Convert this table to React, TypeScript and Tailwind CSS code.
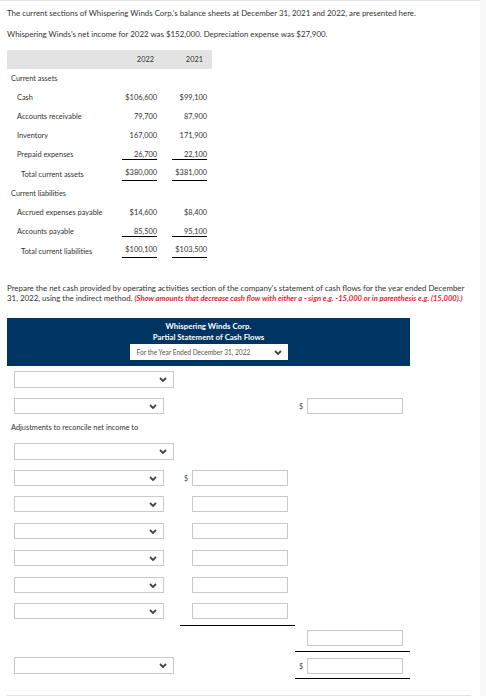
import React from 'react';

interface Row {
  label: string;
  a: string;
  b: string;
  indent: number;
  line?: 'under' | 'total';
}

const assets: Row[] = [
  { label: 'Cash', a: '$106,600', b: '$99,100', indent: 10 },
  { label: 'Accounts receivable', a: '79,700', b: '87,900', indent: 10 },
  { label: 'Inventory', a: '167,000', b: '171,900', indent: 10 },
  { label: 'Prepaid expenses', a: '26,700', b: '22,100', indent: 10, line: 'under' },
  { label: 'Total current assets', a: '$380,000', b: '$381,000', indent: 14, line: 'total' },
];

const liabilities: Row[] = [
  { label: 'Accrued expenses payable', a: '$14,600', b: '$8,400', indent: 10 },
  { label: 'Accounts payable', a: '85,500', b: '95,100', indent: 10, line: 'under' },
  { label: 'Total current liabilities', a: '$100,100', b: '$103,500', indent: 14, line: 'total' },
];

const Chevron = () => (
  <svg width="8" height="5" viewBox="0 0 8 5" className="shrink-0">
    <polyline points="1,1 4,4 7,1" fill="none" stroke="#444" strokeWidth="1.8" />
  </svg>
);

const Select = ({ wide }: { wide?: boolean }) => (
  <div
    className={`${wide ? 'w-[160px] h-[17px]' : 'w-[150px] h-[16px]'} ml-[7px] flex items-center justify-end pr-[6px] border border-[#c9c9c9] bg-white`}
  >
    <Chevron />
  </div>
);

const Amount = ({ dollar }: { dollar?: boolean }) => (
  <div className="w-[115px] flex items-center">
    <span className="w-[12px] pl-[4px] text-[7px] text-[#3c4a5c]">{dollar ? '$' : ''}</span>
    <div className="w-[96px] h-[16px] border border-[#c9c9c9] bg-white" />
  </div>
);

const Num = ({ value, line, w }: { value: string; line?: Row['line']; w: string }) => (
  <div className={`${w} flex justify-end`}>
    <span
      className={`w-[35px] text-right leading-[9px] ${
        line === 'under' ? 'border-b border-black' : line === 'total' ? 'pb-[3px] border-b border-black' : ''
      }`}
    >
      {value}
    </span>
  </div>
);

const TableRow = ({ row }: { row: Row }) => (
  <div className={`flex items-center ${row.line === 'total' ? 'h-[20px] pt-[1px]' : 'h-[19px]'}`}>
    <div className="w-[109px] whitespace-nowrap" style={{ paddingLeft: row.indent }}>
      {row.label}
    </div>
    <Num value={row.a} line={row.line} w="w-[41px]" />
    <Num value={row.b} line={row.line} w="w-[50px]" />
  </div>
);

export default function App() {
  return (
    <div className="flex w-[486px] h-[696px] overflow-hidden bg-white font-['Lato','Noto_Sans',sans-serif] text-[7.9px] leading-[10px] text-[#333]">
      <div className="w-[480px] border-t border-[#e2e2e2] pl-[7px] pt-[7px] flex flex-col">
        <p className="whitespace-nowrap">The current sections of Whispering Winds Corp.'s balance sheets at December 31, 2021 and 2022, are presented here.</p>
        <p className="mt-[11px]">Whispering Winds's net income for 2022 was $152,000. Depreciation expense was $27,900.</p>

        {/* balance sheet table */}
        <div className="mt-[11px] w-[205px] text-[7.4px]">
          <div className="flex h-[19px] items-center bg-[#e3e3e3]">
            <div className="w-[109px]" />
            <div className="w-[41px] text-right pr-[3px]">2022</div>
            <div className="w-[50px] text-right pr-[4px]">2021</div>
          </div>
          <div className="h-[19px] flex items-center pl-[4px]">Current assets</div>
          {assets.map((r) => (
            <TableRow key={r.label} row={r} />
          ))}
          <div className="h-[19px] flex items-center pl-[4px]">Current liabilities</div>
          {liabilities.map((r) => (
            <TableRow key={r.label} row={r} />
          ))}
        </div>

        <p className="mt-[22px] pr-[6px]">
          Prepare the net cash provided by operating activities section of the company's statement of cash flows for the year ended December 31, 2022, using the indirect method.{' '}
          <span className="italic font-bold text-[#ea1c36] text-[7.6px] whitespace-nowrap">
            (Show amounts that decrease cash flow with either a - sign e.g. -15,000 or in parenthesis e.g. (15,000).)
          </span>
        </p>

        {/* cash flow statement */}
        <div className="mt-[15px] w-[403px] h-[48px] bg-[#003462] flex flex-col items-center pt-[3px] text-white font-bold">
          <div className="leading-[11px]">Whispering Winds Corp.</div>
          <div className="leading-[11px]">Partial Statement of Cash Flows</div>
          <div className="mt-[1px] w-[158px] h-[16px] bg-white flex items-center justify-between pl-[7px] pr-[6px] text-[#555] font-normal text-[6.6px]">
            <span>For the Year Ended December 31, 2022</span>
            <Chevron />
          </div>
        </div>

        <div className="mt-[5px]">
          <Select wide />
        </div>
        <div className="mt-[10px] flex items-center">
          <div className="w-[173px]"><Select /></div>
          <div className="w-[115px]" />
          <Amount dollar />
        </div>
        <p className="mt-[9px] pl-[4px] text-[7.4px]">Adjustments to reconcile net income to</p>
        <div className="mt-[10px]">
          <Select wide />
        </div>
        <div className="mt-[10px] flex items-center">
          <div className="w-[173px]"><Select /></div>
          <Amount dollar />
        </div>
        {[10, 11, 11, 11, 10].map((m, i) => (
          <div key={i} className="flex items-center" style={{ marginTop: m }}>
            <div className="w-[173px]"><Select /></div>
            <Amount />
          </div>
        ))}
        <div className="mt-[6px] flex">
          <div className="w-[173px]" />
          <div className="w-[115px] border-t border-black" />
        </div>
        <div className="mt-[4px] flex items-center">
          <div className="w-[288px]" />
          <Amount />
        </div>
        <div className="mt-[5px] flex">
          <div className="w-[288px]" />
          <div className="w-[115px] border-t border-black" />
        </div>
        <div className="mt-[5px] flex items-center">
          <div className="w-[173px]"><Select wide /></div>
          <div className="w-[115px]" />
          <Amount dollar />
        </div>
        <div className="mt-[4px] flex">
          <div className="w-[288px]" />
          <div className="w-[115px] border-t border-black" />
        </div>
        <div className="mt-[16px] w-[464px] border-t border-[#e2e2e2]" />
      </div>
      <div className="w-[6px] bg-[#f8f8f8]" />
    </div>
  );
}
